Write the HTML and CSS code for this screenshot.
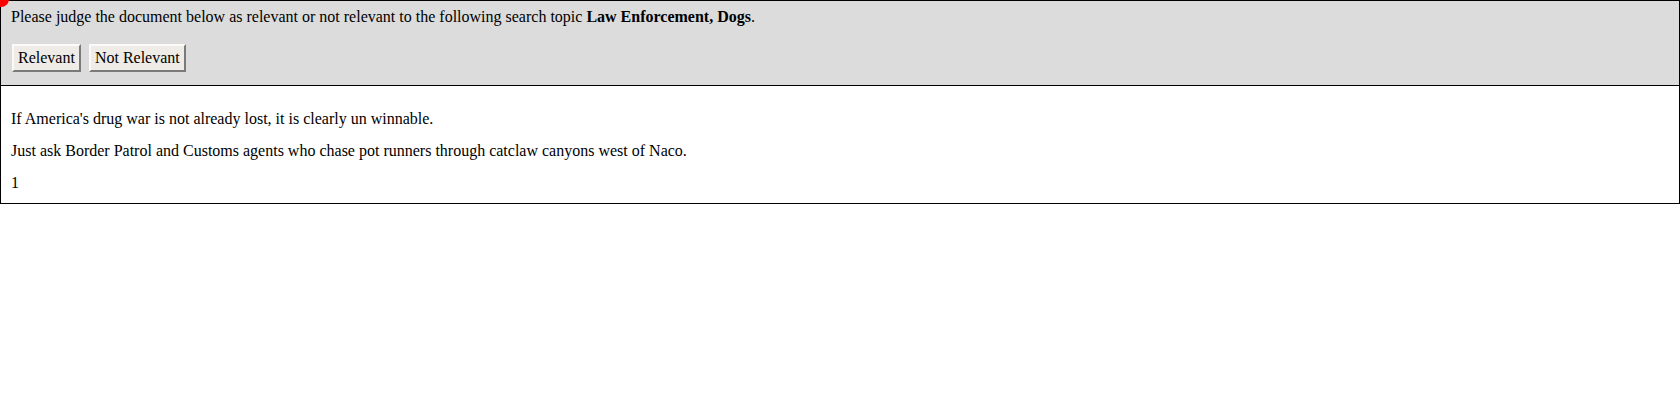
FILE: index.html
```html
<!DOCTYPE html>
<html>
<head>
<meta charset="utf-8">
<link rel="stylesheet" href="styles.css">
</head>
<body>
<span class="dot"></span>
<div class="header">
  <p class="prompt">Please judge the document below as relevant or not relevant to the following search topic <b>Law Enforcement, Dogs</b>.</p>
  <div class="actions">
    <button class="btn">Relevant</button>
    <button class="btn">Not Relevant</button>
  </div>
</div>
<div class="doc">
  <p>If America's drug war is not already lost, it is clearly un winnable.</p>
  <p>Just ask Border Patrol and Customs agents who chase pot runners through catclaw canyons west of Naco.</p>
  <p>1</p>
</div>
</body>
</html>
```
FILE: styles.css
```css
html, body {
  margin: 0;
  padding: 0;
  background: #fff;
}
body {
  font-family: "Liberation Serif", "Times New Roman", serif;
  font-size: 16px;
  color: #000;
  position: relative;
}
.dot {
  position: absolute;
  left: -7px;
  top: -9px;
  width: 16px;
  height: 16px;
  border-radius: 50%;
  background: #ff0000;
  z-index: 2;
}
.header {
  background: #dcdcdc;
  border: 1px solid #000;
  padding: 6px 10px 13px;
}
.prompt {
  margin: 0 0 17px;
  line-height: 20px;
}
.actions {
  display: flex;
  gap: 8px;
  padding-left: 1px;
}
.btn {
  font-family: "Liberation Serif", "Times New Roman", serif;
  font-size: 16px;
  color: #000;
  background: #efebe6;
  border: 2px solid;
  border-color: #fbfaf8 #7a7a7a #7a7a7a #fbfaf8;
  padding: 2px 4px;
  height: 28px;
  line-height: 20px;
  margin: 0;
}
.doc {
  border: 1px solid #000;
  border-top: none;
  padding: 11px 10px 10px;
}
.doc p {
  margin: 12px 0;
  line-height: 20px;
}
.doc p:last-child {
  margin-bottom: 0;
}
```
